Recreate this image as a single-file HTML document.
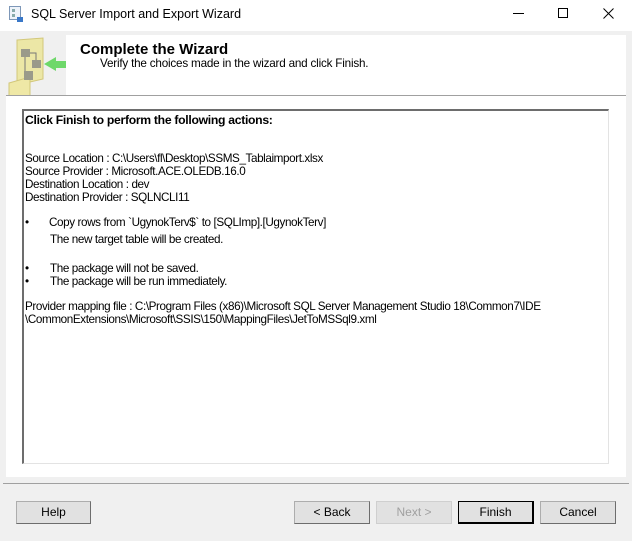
<!DOCTYPE html>
<html><head><style>
*{margin:0;padding:0;box-sizing:border-box}
body{width:632px;height:541px;background:#f0f0f0;position:relative;overflow:hidden;font-family:"Liberation Sans",sans-serif;font-size:11px;color:#000}
.a{position:absolute;white-space:nowrap}
#tb{position:absolute;left:0;top:0;width:632px;height:31px;background:#fff}
#panel{position:absolute;left:6px;top:35px;width:620px;height:442px;background:#fff}
#hsep{position:absolute;left:6px;top:95px;width:620px;height:1px;background:#a0a0a0}
#box{position:absolute;left:22px;top:109px;width:587px;height:355px;background:#fff;border-left:2px solid #6d6d6d;border-top:2px solid #6d6d6d;border-right:1px solid #e3e3e3;border-bottom:1px solid #e3e3e3}
#bsep{position:absolute;left:3px;top:483px;width:626px;height:1px;background:#a0a0a0}
.btn{position:absolute;top:501px;height:23px;background:#e1e1e1;border:1px solid #adadad;border-right-color:#6d6d6d;border-bottom-color:#6d6d6d;font-size:12px;text-align:center;line-height:21px}
.t{font-size:11.7px;letter-spacing:-0.4px}
</style></head><body>
<div id="tb"></div>
<svg class="a" style="left:8px;top:5px" width="16" height="18"><rect x="1.5" y="1.5" width="11" height="13" fill="#eef3fa" stroke="#7d97b8"/><rect x="4" y="4" width="3" height="3" fill="#8aa"/><rect x="4" y="9" width="3" height="3" fill="#8aa"/><rect x="9" y="12" width="6" height="5" fill="#3a78c8"/></svg>
<div class="a" style="left:31px;top:7px;font-size:12.5px">SQL Server Import and Export Wizard</div>
<div class="a" style="left:513px;top:13px;width:11px;height:1px;background:#000"></div>
<div class="a" style="left:558px;top:8px;width:10px;height:10px;border:1px solid #000"></div>
<svg class="a" style="left:603px;top:8px" width="11" height="11"><path d="M0.5 0.5L10.5 10.5M10.5 0.5L0.5 10.5" stroke="#000" stroke-width="1"/></svg>
<div id="panel"></div>
<div class="a" style="left:6px;top:35px;width:60px;height:60px;background:#f0f0f0"></div>
<svg class="a" style="left:6px;top:35px" width="60" height="60">
<path d="M11 5L37 3L37 44L11 50Z" fill="#ece7a6" stroke="#d2c77a"/>
<path d="M3 48L24 42L24 62L3 62Z" fill="#efe8a6" stroke="#d2c77a"/>
<rect x="15" y="14" width="9" height="8" fill="#9a9a8a"/><rect x="26" y="25" width="9" height="8" fill="#9a9a8a"/><rect x="18" y="36" width="9" height="9" fill="#9a9a8a"/>
<path d="M19 22V36M24 18H30V25" stroke="#777" fill="none"/>
<path d="M38 29L50 22L50 26L60 26L60 33L50 33L50 36Z" fill="#6ed86a"/>
</svg>
<div class="a" style="left:80px;top:41px;font-size:15px;font-weight:bold">Complete the Wizard</div>
<div class="a t" style="left:100px;top:57px;letter-spacing:-0.2px">Verify the choices made in the wizard and click Finish.</div>
<div id="hsep"></div>
<div id="box"></div>
<div class="a" style="left:25px;top:113px;font-size:12.2px;font-weight:bold;letter-spacing:-0.3px">Click Finish to perform the following actions:</div>
<div class="a t" style="left:25px;top:152px;line-height:13px">Source Location : C:\Users\fl\Desktop\SSMS_Tablaimport.xlsx<br>Source Provider : Microsoft.ACE.OLEDB.16.0<br>Destination Location : dev<br>Destination Provider : SQLNCLI11</div>
<div class="a t" style="left:25px;top:216px">•</div>
<div class="a t" style="left:49px;top:216px">Copy rows from `UgynokTerv$` to [SQLImp].[UgynokTerv]</div>
<div class="a t" style="left:50px;top:233px">The new target table will be created.</div>
<div class="a t" style="left:25px;top:262px;line-height:13px">•<br>•</div>
<div class="a t" style="left:50px;top:262px;line-height:13px">The package will not be saved.<br>The package will be run immediately.</div>
<div class="a t" style="left:25px;top:300px;line-height:13px">Provider mapping file : C:\Program Files (x86)\Microsoft SQL Server Management Studio 18\Common7\IDE<br>\CommonExtensions\Microsoft\SSIS\150\MappingFiles\JetToMSSql9.xml</div>
<div id="bsep"></div>
<div class="btn" style="left:16px;width:75px">Help</div>
<div class="btn" style="left:294px;width:76px">&lt; Back</div>
<div class="btn" style="left:376px;width:76px;color:#a0a0a0;border-color:#cfcfcf">Next &gt;</div>
<div class="btn" style="left:458px;width:76px;border:1px solid #000;border-right:2px solid #000;border-bottom:2px solid #000">Finish</div>
<div class="btn" style="left:540px;width:76px">Cancel</div>
</body></html>
